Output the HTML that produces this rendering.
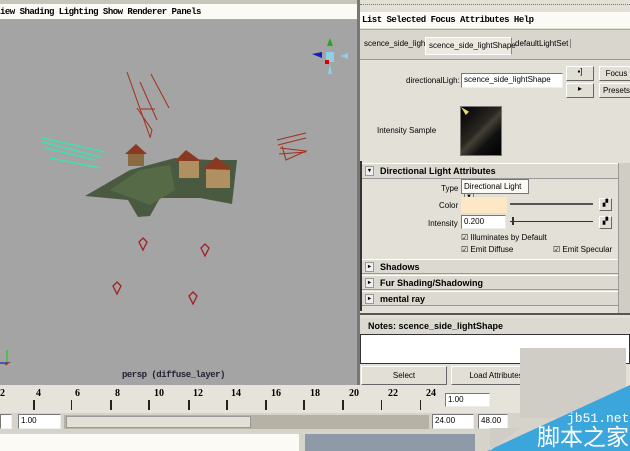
<!DOCTYPE html>
<html><head><meta charset="utf-8"><style>
*{margin:0;padding:0;box-sizing:border-box}
body{width:630px;height:451px;overflow:hidden;background:#d8d5cc;position:relative;font-family:"Liberation Sans",sans-serif;font-size:9px;color:#000}
.a{position:absolute}
.mono{font-family:"Liberation Mono",monospace;font-weight:bold;font-size:9px;letter-spacing:-0.5px}
.fld{position:absolute;background:#fff;border:1px solid #777;border-right-color:#eee;border-bottom-color:#eee;font-size:8px;padding-left:2px;line-height:12px}
.btn{position:absolute;background:#e2dfd6;border:1px solid #fff;border-right-color:#666;border-bottom-color:#666;font-size:8px;text-align:center}
.sec{position:absolute;left:362px;width:256px;height:15px;border-top:1px solid #fff;border-bottom:1px solid #999;background:#dcd9d0;font-weight:bold;font-size:9px;line-height:14px;padding-left:18px}
.sec i{position:absolute;left:3px;top:2px;width:9px;height:10px;border:1px solid #999;background:#eee;font-style:normal;font-size:6px;line-height:9px;text-align:center}
.tk{position:absolute;top:400px;width:2px;height:10px;background:#222}
.tl{position:absolute;top:388px;font-family:"Liberation Serif",serif;font-weight:bold;font-size:10px}
</style></head><body>
<div class="a" style="left:0;top:0;width:359px;height:4px;background:#c8c5ba"></div>
<div class="a" style="left:0;top:4px;width:357px;height:16px;background:#fbfaf5;border-bottom:1px solid #aaa"></div>
<div class="a mono" style="left:0;top:7px">iew Shading Lighting Show Renderer Panels</div>
<div class="a" style="left:0;top:20px;width:357px;height:365px;background:#a4a4a4"></div>
<div class="a" style="left:357px;top:0;width:3px;height:385px;background:#777"></div>
<svg class="a" style="left:0;top:20px" width="357" height="365">
 <rect x="326" y="32" width="8" height="10" fill="#8cd0e8"/>
 <polygon points="330,18 327,26 333,26" fill="#2a2"/>
 <polygon points="312,34 322,32 322,38" fill="#1020c0"/>
 <rect x="325" y="40" width="4" height="4" fill="#d00"/>
 <polygon points="340,36 348,33 348,39" fill="#8cd0e8"/>
 <polygon points="330,44 328,54 332,54" fill="#8cd0e8"/>
 <g stroke="#a03020" stroke-width="1" fill="none">
  <line x1="127" y1="52" x2="150" y2="117"/><line x1="140" y1="62" x2="157" y2="100"/><line x1="151" y1="54" x2="169" y2="88"/>
  <polyline points="137,88 152,110 150,118"/><line x1="140" y1="89" x2="155" y2="89"/>
  <line x1="277" y1="120" x2="306" y2="113"/><line x1="278" y1="125" x2="306" y2="118"/>
  <polyline points="280,128 306,131 286,140 282,126"/><line x1="279" y1="134" x2="306" y2="132"/>
 </g>
 <g stroke="#40e0b0" stroke-width="1.5">
  <line x1="42" y1="118" x2="105" y2="132"/><line x1="42" y1="122" x2="100" y2="137"/><line x1="45" y1="128" x2="95" y2="140"/><line x1="50" y1="138" x2="100" y2="148"/>
 </g>
 <polygon points="85,176 130,150 175,138 210,140 237,140 232,184 200,178 160,178 150,196 138,197 128,180" fill="#4a5a40"/>
 <polygon points="110,170 140,150 170,145 175,170 150,185" fill="#566a48"/>
 <rect x="128" y="132" width="16" height="14" fill="#8a6a40"/><polygon points="125,134 136,124 147,134" fill="#8a3a20"/>
 <rect x="179" y="140" width="20" height="18" fill="#b09060"/><polygon points="175,141 186,130 201,141" fill="#8a3a20"/>
 <rect x="206" y="148" width="24" height="20" fill="#b09060"/><polygon points="203,149 216,137 233,150" fill="#8a3a20"/>
 <g fill="none" stroke="#a02020" stroke-width="1.3">
  <path d="M143,218 l4,4 l-4,8 l-4,-8 z"/><path d="M205,224 l4,4 l-4,8 l-4,-8 z"/>
  <path d="M117,262 l4,4 l-4,8 l-4,-8 z"/><path d="M193,272 l4,4 l-4,8 l-4,-8 z"/>
 </g>
 <g stroke-width="1.3"><line x1="7" y1="330" x2="7" y2="345" stroke="#2c2"/><line x1="0" y1="343" x2="8" y2="343" stroke="#22c"/><line x1="5" y1="345" x2="10" y2="342" stroke="#c22"/></g>
</svg>
<div class="a mono" style="left:122px;top:370px;color:#223">persp (diffuse_layer)</div>
<div class="a" style="left:360px;top:0;width:270px;height:385px;background:#e3e0d7"></div>
<div class="a" style="left:360px;top:4px;width:270px;height:1px;border-top:1px dotted #777"></div>
<div class="a" style="left:360px;top:12px;width:270px;height:16px;background:#fbfaf5"></div>
<div class="a mono" style="left:362px;top:15px">List Selected Focus Attributes Help</div>
<div class="a" style="left:360px;top:29px;width:270px;height:30px;background:#d9d6cd;border-top:1px solid #aaa"></div>
<div class="a" style="left:364px;top:39px;font-size:8px">scence_side_ligh:</div>
<div class="a" style="left:425px;top:37px;width:87px;height:18px;background:#ece9e0;border:1px solid #fff;border-right-color:#888;font-size:8px;padding:3px 0 0 3px">scence_side_lightShape</div>
<div class="a" style="left:515px;top:39px;font-size:8px;border-right:1px solid #888;padding-right:2px">defaultLightSet</div>
<div class="a" style="left:360px;top:59px;width:270px;height:1px;background:#999"></div>
<div class="a" style="left:406px;top:76px;font-size:8px">directionalLigh:</div>
<div class="fld" style="left:461px;top:73px;width:102px;height:15px">scence_side_lightShape</div>
<div class="btn" style="left:566px;top:66px;width:28px;height:15px">▪]</div>
<div class="btn" style="left:566px;top:83px;width:28px;height:15px">▸</div>
<div class="btn" style="left:599px;top:66px;width:35px;height:15px;line-height:13px">Focus</div>
<div class="btn" style="left:599px;top:83px;width:35px;height:15px;line-height:13px">Presets</div>
<div class="a" style="left:377px;top:126px;font-size:8px">Intensity Sample</div>
<div class="a" style="left:460px;top:106px;width:42px;height:50px;background:linear-gradient(135deg,#000 0%,#2a2820 45%,#444035 52%,#111 70%,#000 100%);border:1px solid #777"></div>
<div class="a" style="left:461px;top:107px;width:8px;height:8px;background:#e8d870;clip-path:polygon(0 0,100% 60%,60% 100%)"></div>
<div class="a" style="left:360px;top:161px;width:2px;height:150px;background:#333"></div>
<div class="sec" style="top:163px;height:16px"><i>▾</i>Directional Light Attributes</div>
<div class="a" style="left:618px;top:163px;width:12px;height:150px;background:#d0cdc4;border-left:1px solid #999"></div>
<div class="a" style="left:441px;top:184px;font-size:8px">Type</div>
<div class="a" style="left:461px;top:179px;width:68px;height:15px;background:#fbfaf5;border:1px solid #777;font-size:8px;padding:2px 0 0 2px">Directional Light <span style="border:1px solid #777;padding:0 1px;font-size:6px">▼</span></div>
<div class="a" style="left:439px;top:201px;font-size:8px">Color</div>
<div class="a" style="left:461px;top:197px;width:46px;height:16px;background:#fde7c5"></div>
<div class="a" style="left:510px;top:203px;width:83px;height:2px;border:1px solid #555;border-right:none"></div>
<div class="btn" style="left:599px;top:198px;width:13px;height:13px;font-size:7px">▞</div>
<div class="a" style="left:428px;top:219px;font-size:8px">Intensity</div>
<div class="fld" style="left:461px;top:215px;width:45px;height:14px">0.200</div>
<div class="a" style="left:510px;top:221px;width:83px;height:1px;background:#333"></div>
<div class="a" style="left:512px;top:217px;width:2px;height:8px;background:#333"></div>
<div class="btn" style="left:599px;top:216px;width:13px;height:13px;font-size:7px">▞</div>
<div class="a" style="left:461px;top:233px;font-size:8px">☑ Illuminates by Default</div>
<div class="a" style="left:461px;top:245px;font-size:8px">☑ Emit Diffuse</div>
<div class="a" style="left:553px;top:245px;font-size:8px">☑ Emit Specular</div>
<div class="sec" style="top:259px"><i>▸</i>Shadows</div>
<div class="sec" style="top:275px"><i>▸</i>Fur Shading/Shadowing</div>
<div class="sec" style="top:291px"><i>▸</i>mental ray</div>
<div class="a" style="left:360px;top:313px;width:270px;height:2px;background:#555"></div>
<div class="a" style="left:360px;top:318px;width:270px;height:16px;background:#dcd9d0;font-weight:bold;font-size:9px;padding:3px 0 0 8px">Notes: scence_side_lightShape</div>
<div class="a" style="left:360px;top:334px;width:270px;height:30px;background:#fff;border:1px solid #333"></div>
<div class="btn" style="left:361px;top:366px;width:86px;height:19px;line-height:17px">Select</div>
<div class="btn" style="left:451px;top:366px;width:90px;height:19px;line-height:17px">Load Attributes</div>
<div class="a" style="left:0;top:385px;width:630px;height:28px;background:#e6e3da"></div>
<div class="tl" style="left:0">2</div><div class="tl" style="left:36px">4</div><div class="tl" style="left:75px">6</div><div class="tl" style="left:115px">8</div><div class="tl" style="left:154px">10</div><div class="tl" style="left:193px">12</div><div class="tl" style="left:231px">14</div><div class="tl" style="left:271px">16</div><div class="tl" style="left:310px">18</div><div class="tl" style="left:349px">20</div><div class="tl" style="left:388px">22</div><div class="tl" style="left:426px">24</div>
<div class="tk" style="left:33px"></div><div class="tk" style="left:71px;width:1px"></div><div class="tk" style="left:110px"></div><div class="tk" style="left:148px"></div><div class="tk" style="left:188px"></div><div class="tk" style="left:226px"></div><div class="tk" style="left:265px"></div><div class="tk" style="left:303px"></div><div class="tk" style="left:342px"></div><div class="tk" style="left:381px;width:1px"></div><div class="tk" style="left:420px;width:1px"></div>
<div class="fld" style="left:445px;top:393px;width:45px;height:14px">1.00</div>
<div class="a" style="left:0;top:413px;width:630px;height:19px;background:#d6d3ca"></div>
<div class="fld" style="left:0;top:414px;width:12px;height:15px"></div>
<div class="fld" style="left:18px;top:414px;width:43px;height:15px">1.00</div>
<div class="a" style="left:64px;top:415px;width:365px;height:14px;background:#b6b2a5"></div>
<div class="a" style="left:66px;top:416px;width:185px;height:12px;background:#e3e0d6;border:1px solid #999"></div>
<div class="fld" style="left:432px;top:414px;width:42px;height:15px">24.00</div>
<div class="fld" style="left:478px;top:414px;width:30px;height:15px">48.00</div>
<div class="a" style="left:0;top:433px;width:630px;height:18px;background:#d6d3ca"></div>
<div class="a" style="left:0;top:434px;width:299px;height:17px;background:#fbfaf5"></div>
<div class="a" style="left:305px;top:434px;width:170px;height:17px;background:#8e9aa8"></div>
<div class="a" style="left:520px;top:348px;width:106px;height:70px;background:#cfcdc6"></div>
<div class="a" style="left:0;top:0;width:630px;height:451px;background:#3aa6dc;clip-path:polygon(487px 451px,630px 385px,630px 451px)"></div>
<div class="a" style="left:490px;top:428px;width:30px;height:23px;background:#cfcdc6;clip-path:polygon(0 0,100% 0,0 100%)"></div>
<div class="a" style="left:567px;top:411px;color:#fff;font-family:'Liberation Mono',monospace;font-size:13px">jb51.net</div>
<div class="a" style="left:537px;top:424px;color:#fff;font-family:'Liberation Sans','Noto Sans CJK SC',sans-serif;font-size:23px;line-height:27px">脚本之家</div>
</body></html>
